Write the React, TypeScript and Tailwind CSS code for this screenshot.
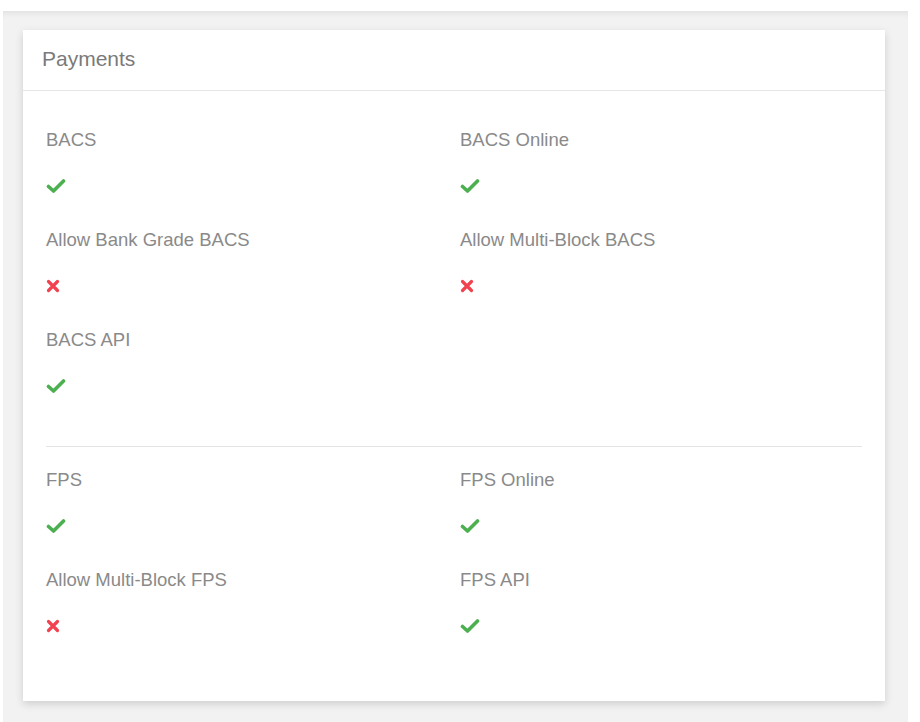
import React from "react";

const Check = () => (
  <svg width="20" height="16" viewBox="0 0 20 16" className="block">
    <path d="M2.5 8.5 L7.5 13 L17.5 3" fill="none" stroke="#4caf50" strokeWidth="3.6" strokeLinecap="round" strokeLinejoin="round" />
  </svg>
);

const Cross = () => (
  <svg width="14" height="14" viewBox="0 0 14 14" className="block">
    <path d="M2.5 2.5 L11.5 11.5 M11.5 2.5 L2.5 11.5" fill="none" stroke="#f0424f" strokeWidth="3.2" strokeLinecap="round" />
  </svg>
);

const Item = ({ label, ok }: { label: string; ok: boolean }) => (
  <div className="h-[100px]">
    <div className="h-[24px] leading-[24px] text-[18.5px] text-[#8a8a8a]">{label}</div>
    <div className="mt-[24px] h-[20px] flex items-center">{ok ? <Check /> : <Cross />}</div>
  </div>
);

export default function App() {
  return (
    <div className="w-[920px] h-[722px] bg-white overflow-hidden" style={{ fontFamily: '"Liberation Sans", Arial, sans-serif' }}>
      <div className="ml-[3px] mr-[12px] mt-[11px] h-[711px] bg-[#f2f2f2] shadow-[inset_0_6px_6px_-4px_rgba(0,0,0,0.08)] pl-[20px] pr-[23px] pt-[19px]">
        <div className="w-[862px] h-[671px] bg-white shadow-[0_3px_8px_rgba(0,0,0,0.15)]">
          <div className="h-[61px] border-b border-[#e6e6e6] pl-[19px] flex items-center pb-[2px]">
            <span className="text-[21px] text-[#7a7a7a]">Payments</span>
          </div>
          <div className="px-[23px] pt-[37px]">
            <div className="grid grid-cols-[414px_1fr]">
              <Item label="BACS" ok={true} />
              <Item label="BACS Online" ok={true} />
              <Item label="Allow Bank Grade BACS" ok={false} />
              <Item label="Allow Multi-Block BACS" ok={false} />
              <Item label="BACS API" ok={true} />
            </div>
            <div className="mt-[18px] border-t border-[#e3e3e3]" />
            <div className="grid grid-cols-[414px_1fr] pt-[21px]">
              <Item label="FPS" ok={true} />
              <Item label="FPS Online" ok={true} />
              <Item label="Allow Multi-Block FPS" ok={false} />
              <Item label="FPS API" ok={true} />
            </div>
          </div>
        </div>
      </div>
    </div>
  );
}
